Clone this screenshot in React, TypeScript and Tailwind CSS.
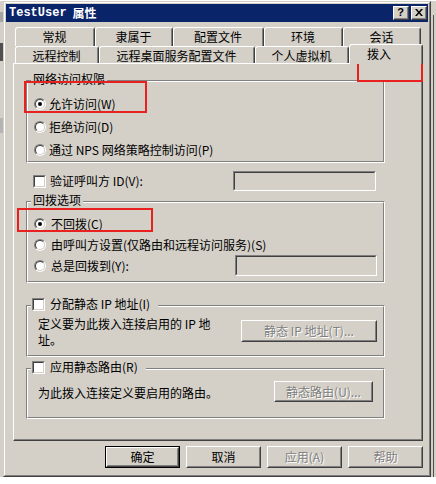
import React from "react";

const FONT = "font-['Noto_Sans_CJK_SC','Noto_Sans',sans-serif]";

// classic raised push button
function Btn({
  label,
  disabled,
  primary,
  className,
}: {
  label: string;
  disabled?: boolean;
  primary?: boolean;
  className?: string;
}) {
  const face = (
    <div className="h-full border border-t-white border-l-white border-r-[#404040] border-b-[#404040]">
      <div className="h-full flex items-center justify-center border border-t-[#d4d0c8] border-l-[#d4d0c8] border-r-[#808080] border-b-[#808080]">
        <span
          className={
            disabled
              ? "text-[#808080] [text-shadow:1px_1px_0_#fff] leading-[14px]"
              : "text-black leading-[14px]"
          }
        >
          {label}
        </span>
      </div>
    </div>
  );
  return (
    <div className={`${primary ? "border border-black" : ""} ${className ?? ""}`}>
      {face}
    </div>
  );
}

function Field({ className }: { className?: string }) {
  return (
    <div
      className={`border border-t-[#808080] border-l-[#808080] border-r-white border-b-white ${className ?? ""}`}
    >
      <div className="h-full border border-t-[#404040] border-l-[#404040] border-r-[#d4d0c8] border-b-[#d4d0c8] bg-[#d4d0c8]" />
    </div>
  );
}

function Radio({ checked }: { checked?: boolean }) {
  return (
    <div className="w-[12px] h-[12px] shrink-0 rounded-full border border-t-[#808080] border-l-[#808080] border-r-white border-b-white">
      <div className="w-full h-full rounded-full border border-t-[#404040] border-l-[#404040] border-r-[#d4d0c8] border-b-[#d4d0c8] bg-white flex items-center justify-center">
        {checked && <div className="w-[4px] h-[4px] rounded-full bg-black" />}
      </div>
    </div>
  );
}

function Check() {
  return (
    <div className="w-[13px] h-[13px] shrink-0 border border-t-[#808080] border-l-[#808080] border-r-white border-b-white">
      <div className="w-full h-full border border-t-[#404040] border-l-[#404040] border-r-[#d4d0c8] border-b-[#d4d0c8] bg-white" />
    </div>
  );
}

// etched group box, the caption sits over the top line
function Group({
  caption,
  className,
  children,
}: {
  caption: React.ReactNode;
  className?: string;
  children?: React.ReactNode;
}) {
  return (
    <div
      className={`relative w-[359px] border border-t-[#808080] border-l-[#808080] border-r-white border-b-white ${className ?? ""}`}
    >
      <div className="h-full border border-t-white border-l-white border-r-[#808080] border-b-[#808080]">
        {children}
      </div>
      <div className="absolute -top-[9px] left-[4px] h-[14px] flex items-center bg-[#d4d0c8] px-[2px] leading-[14px]">
        {caption}
      </div>
    </div>
  );
}

function CheckCaption({ label }: { label: string }) {
  return (
    <div className="flex items-center gap-[5px] -ml-[1px] pr-[6px]">
      <Check />
      <span>{label}</span>
    </div>
  );
}

function Tab({
  label,
  w,
  h,
  selected,
}: {
  label: string;
  w: string;
  h: string;
  selected?: boolean;
}) {
  return (
    <div
      className={`${w} ${h} flex rounded-t-[3px] border-t border-l border-t-white border-l-white border-r border-r-[#404040] bg-[#d4d0c8] ${
        selected ? "relative z-10 -mb-[1px] pt-[1px]" : "pt-[1px]"
      }`}
    >
      <div
        className={`flex-1 flex border-r border-r-[#808080] leading-[15px] ${
          selected ? "justify-start pl-[17px]" : "justify-center"
        }`}
      >
        {label}
      </div>
    </div>
  );
}

export default function App() {
  return (
    <div className={`relative w-[436px] h-[484px] bg-white overflow-hidden text-[12px] text-black ${FONT}`}>
      <div className="flex pt-[1px]">
        {/* desktop behind, left */}
        <div className="w-[3px] h-[476px] flex flex-col bg-[#d4d0c8]">
          <div className="h-[11px]" />
          <div className="h-[10px] bg-[#a4a4a4]" />
          <div className="h-[21px]" />
          <div className="h-[18px] bg-[#505050]" />
          <div className="h-[57px]" />
          <div className="h-[15px] bg-[#b4b4b4]" />
        </div>

        {/* window */}
        <div className="w-[428px] h-[476px] border border-t-[#d4d0c8] border-l-[#d4d0c8] border-r-[#404040] border-b-[#404040] bg-[#d4d0c8]">
          <div className="h-full border border-t-white border-l-white border-r-[#808080] border-b-[#808080] p-[1px] flex flex-col">
            {/* title bar */}
            <div className="h-[18px] bg-[#0a246a] flex items-center justify-between pl-[3px] pr-[1px]">
              <div className="flex items-center gap-[6px] text-white font-bold">
                <span className="font-['Liberation_Mono',monospace] text-[12px] leading-[14px]">TestUser</span>
                <span className="text-[12px] leading-[14px]">属性</span>
              </div>
              <div className="flex gap-[2px]">
                <div className="w-[16px] h-[14px] border border-t-white border-l-white border-r-[#404040] border-b-[#404040]">
                  <div className="h-full flex items-center justify-center border-r border-b border-r-[#808080] border-b-[#808080] bg-[#d4d0c8] font-bold text-[11px] leading-[11px] font-['Liberation_Sans',sans-serif]">
                    ?
                  </div>
                </div>
                <div className="w-[16px] h-[14px] border border-t-white border-l-white border-r-[#404040] border-b-[#404040]">
                  <div className="h-full flex items-center justify-center border-r border-b border-r-[#808080] border-b-[#808080] bg-[#d4d0c8]">
                    <svg width="8" height="7" viewBox="0 0 8 7">
                      <path d="M0 0h2l2 2.5L6 0h2L5 3.5 8 7H6L4 4.5 2 7H0l3-3.5z" fill="#000" />
                    </svg>
                  </div>
                </div>
              </div>
            </div>

            {/* body */}
            <div className="flex flex-col pl-[7px] pr-[5px]">
              {/* tabs */}
              <div className="mt-[5px] ml-[2px] flex h-[19px]">
                <Tab label="常规" w="w-[80px]" h="h-[19px]" />
                <Tab label="隶属于" w="w-[78px]" h="h-[19px]" />
                <Tab label="配置文件" w="w-[91px]" h="h-[19px]" />
                <Tab label="环境" w="w-[79px]" h="h-[19px]" />
                <Tab label="会话" w="w-[78px]" h="h-[19px]" />
              </div>
              <div className="-mt-[2px] ml-[2px] flex items-end h-[19px]">
                <Tab label="远程控制" w="w-[84px]" h="h-[17px]" />
                <Tab label="远程桌面服务配置文件" w="w-[156px]" h="h-[17px]" />
                <Tab label="个人虚拟机" w="w-[94px]" h="h-[17px]" />
                <Tab label="拨入" w="w-[74px]" h="h-[20px]" selected />
              </div>

              {/* page */}
              <div className="h-[378px] border-t border-l border-t-white border-l-white border-r border-b border-r-[#404040] border-b-[#404040] shadow-[inset_-1px_-1px_0_#808080] pl-[12px] flex flex-col">
                <Group caption="网络访问权限" className="mt-[16px] h-[83px]">
                  <div className="pt-[10px] pl-[6px] flex flex-col">
                    <div className="h-[23px] flex items-center gap-[3px]">
                      <Radio checked />
                      <span>允许访问(W)</span>
                    </div>
                    <div className="h-[23px] flex items-center gap-[3px]">
                      <Radio />
                      <span>拒绝访问(D)</span>
                    </div>
                    <div className="h-[23px] flex items-center gap-[3px]">
                      <Radio />
                      <span>通过 NPS 网络策略控制访问(P)</span>
                    </div>
                  </div>
                </Group>

                <div className="mt-[7px] h-[22px] w-[359px] flex items-center justify-between pl-[7px] pr-[9px]">
                  <div className="flex items-center gap-[4px]">
                    <Check />
                    <span>验证呼叫方 ID(V):</span>
                  </div>
                  <Field className="w-[143px] h-[20px]" />
                </div>

                <Group caption="回拨选项" className="mt-[9px] h-[82px]">
                  <div className="pt-[10px] pl-[6px] pr-[6px] flex flex-col">
                    <div className="h-[21px] flex items-center gap-[5px]">
                      <Radio checked />
                      <span>不回拨(C)</span>
                    </div>
                    <div className="h-[21px] flex items-center gap-[5px]">
                      <Radio />
                      <span>由呼叫方设置(仅路由和远程访问服务)(S)</span>
                    </div>
                    <div className="h-[21px] flex items-center justify-between">
                      <div className="flex items-center gap-[5px]">
                        <Radio />
                        <span>总是回拨到(Y):</span>
                      </div>
                      <Field className="w-[142px] h-[21px]" />
                    </div>
                  </div>
                </Group>

                <Group caption={<CheckCaption label="分配静态 IP 地址(I)" />} className="mt-[22px] h-[52px]">
                  <div className="pt-[9px] pl-[10px] pr-[6px] flex items-start justify-between">
                    <div className="leading-[16px]">
                      定义要为此拨入连接启用的 IP 地
                      <br />
                      址。
                    </div>
                    <Btn label="静态 IP 地址(T)..." disabled className="mt-[4px] w-[136px] h-[22px]" />
                  </div>
                </Group>

                <Group caption={<CheckCaption label="应用静态路由(R)" />} className="mt-[11px] h-[51px]">
                  <div className="pt-[11px] pl-[10px] pr-[10px] h-[32px] flex items-center justify-between">
                    <span className="leading-[14px] pt-[2px]">为此拨入连接定义要启用的路由。</span>
                    <Btn label="静态路由(U)..." disabled className="w-[99px] h-[21px]" />
                  </div>
                </Group>
              </div>

              {/* dialog buttons */}
              <div className="mt-[5px] flex justify-end gap-[6px]">
                <Btn label="确定" primary className="w-[75px] h-[22px]" />
                <Btn label="取消" className="w-[75px] h-[22px]" />
                <Btn label="应用(A)" disabled className="w-[75px] h-[22px]" />
                <Btn label="帮助" disabled className="w-[75px] h-[22px]" />
              </div>
            </div>
          </div>
        </div>

        {/* desktop behind, right */}
        <div className="w-[5px] h-[476px] flex bg-[#d4d0c8]">
          <div className="w-[2px]" />
          <div className="w-[1px] mt-[14px] bg-[#505050]" />
        </div>
      </div>

      {/* red annotation boxes */}
      <div className="absolute left-[357px] top-[47px] w-[66px] h-[35px] border-2 border-[#e82020]" />
      <div className="absolute left-[24px] top-[81px] w-[123px] h-[32px] border-2 border-[#e82020]" />
      <div className="absolute left-[17px] top-[208px] w-[136px] h-[24px] border-2 border-[#e82020]" />
    </div>
  );
}
